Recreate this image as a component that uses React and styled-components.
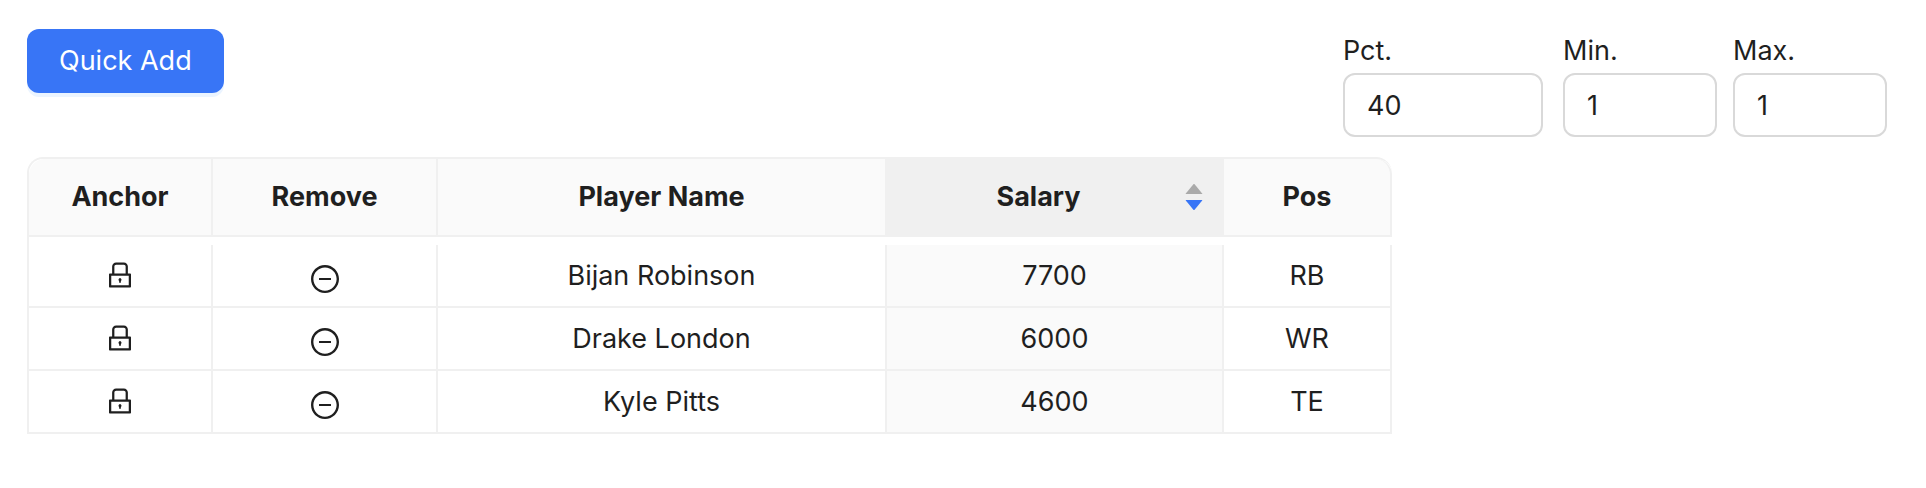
import React, { useState } from "react";
import styled, { createGlobalStyle } from "styled-components";
import { AiOutlineLock, AiOutlineMinusCircle } from "react-icons/ai";

const roster = [
  { name: "Bijan Robinson", salary: 7700, pos: "RB" },
  { name: "Drake London", salary: 6000, pos: "WR" },
  { name: "Kyle Pitts", salary: 4600, pos: "TE" },
];

export default function App() {
  const [players, setPlayers] = useState(roster);
  const [descending, setDescending] = useState(true);

  const rows = [...players].sort((a, b) =>
    descending ? b.salary - a.salary : a.salary - b.salary
  );

  const remove = (name) => setPlayers(players.filter((p) => p.name !== name));

  return (
    <Page>
      <GlobalStyle />
      <Toolbar>
        <PrimaryButton type="button">Quick Add</PrimaryButton>
        <Fields>
          <Field id="pct" label="Pct." value="40" width={200} />
          <Limits>
            <Field id="min" label="Min." value="1" width={154} />
            <Field id="max" label="Max." value="1" width={154} />
          </Limits>
        </Fields>
      </Toolbar>
      <TableContainer>
        <Table>
          <colgroup>
            <Col width={184} />
            <Col width={225} />
            <Col width={449} />
            <Col width={337} />
            <Col width={168} />
          </colgroup>
          <thead>
            <tr>
              <HeadCell>Anchor</HeadCell>
              <HeadCell>Remove</HeadCell>
              <HeadCell>Player Name</HeadCell>
              <HeadCell $sorted aria-sort={descending ? "descending" : "ascending"}>
                <SortButton type="button" onClick={() => setDescending(!descending)}>
                  <SortTitle>Salary</SortTitle>
                  <Sorter descending={descending} />
                </SortButton>
              </HeadCell>
              <HeadCell>Pos</HeadCell>
            </tr>
          </thead>
          <tbody>
            <tr aria-hidden="true">
              <SpacerCell colSpan={5} />
            </tr>
            {rows.map((player) => (
              <tr key={player.name}>
                <Cell>
                  <IconButton type="button" aria-label={`Anchor ${player.name}`}>
                    <AiOutlineLock />
                  </IconButton>
                </Cell>
                <Cell>
                  <RemoveButton
                    type="button"
                    aria-label={`Remove ${player.name}`}
                    onClick={() => remove(player.name)}
                  >
                    <AiOutlineMinusCircle />
                  </RemoveButton>
                </Cell>
                <Cell>{player.name}</Cell>
                <Cell $sorted>{player.salary}</Cell>
                <Cell>{player.pos}</Cell>
              </tr>
            ))}
          </tbody>
        </Table>
      </TableContainer>
    </Page>
  );
}

function Field({ id, label, value, width }) {
  return (
    <FieldBox $width={width}>
      <label htmlFor={id}>{label}</label>
      <Input id={id} type="text" inputMode="numeric" defaultValue={value} />
    </FieldBox>
  );
}

function Sorter({ descending }) {
  return (
    <SorterIcon viewBox="0 0 24 26" aria-hidden="true">
      <path
        d="M11.4 0.3q0.6-0.6 1.2 0l7.6 9.1q0.5 0.6-0.3 0.6h-15.8q-0.8 0-0.3-0.6z"
        fill={descending ? "#aaaaaa" : "#3875f6"}
      />
      <path
        d="M11.4 25.7q0.6 0.6 1.2 0l7.6-9.1q0.5-0.6-0.3-0.6h-15.8q-0.8 0-0.3 0.6z"
        fill={descending ? "#3875f6" : "#aaaaaa"}
      />
    </SorterIcon>
  );
}

const GlobalStyle = createGlobalStyle`
  *, *::before, *::after {
    box-sizing: border-box;
  }
  body {
    margin: 0;
    background: #ffffff;
    color: #1f1f1f;
    font-family: Inter, "Liberation Sans", sans-serif;
    font-size: 27px;
    line-height: 44px;
  }
  button, input {
    font: inherit;
    color: inherit;
  }
  button {
    cursor: pointer;
  }
`;

const Page = styled.main`
  padding: 29px 39px 29px 27px;
`;

const Toolbar = styled.div`
  display: flex;
  justify-content: space-between;
  align-items: flex-start;
  margin-bottom: 20px;
`;

const PrimaryButton = styled.button`
  height: 64px;
  padding: 0 32px;
  border: none;
  border-radius: 12px;
  background: #3875f6;
  box-shadow: 0 4px 0 #ebf4ff;
  color: #ffffff;
`;

const Fields = styled.div`
  display: flex;
  gap: 20px;
`;

const Limits = styled.div`
  display: flex;
  gap: 16px;
`;

const FieldBox = styled.div`
  display: flex;
  flex-direction: column;
  width: ${(props) => props.$width}px;
`;

const Input = styled.input`
  width: 100%;
  height: 64px;
  padding: 0 22px;
  border: 2px solid #d9d9d9;
  border-radius: 12px;
  background: #ffffff;
`;

const TableContainer = styled.div`
  max-width: 1365px;
  border-top: 2px solid #f0f0f0;
  border-left: 2px solid #f0f0f0;
  border-radius: 16px 16px 0 0;
`;

const Table = styled.table`
  width: 100%;
  table-layout: fixed;
  border-collapse: separate;
  border-spacing: 0;
  text-align: center;
`;

const Col = styled.col`
  width: ${(props) => props.width}px;
`;

const HeadCell = styled.th`
  padding: 16px;
  border-right: 2px solid #f0f0f0;
  border-bottom: 2px solid #f0f0f0;
  background: ${(props) => (props.$sorted ? "#f0f0f0" : "#fafafa")};
  font-weight: 700;
  &:first-child {
    border-top-left-radius: 16px;
  }
  &:last-child {
    border-top-right-radius: 16px;
  }
`;

const SortButton = styled.button`
  display: flex;
  align-items: center;
  gap: 8px;
  width: 100%;
  padding: 0;
  border: none;
  background: none;
`;

const SortTitle = styled.span`
  flex: 1;
`;

const SorterIcon = styled.svg`
  width: 24px;
  height: 26px;
`;

const SpacerCell = styled.td`
  height: 8px;
  padding: 0;
`;

const Cell = styled.td`
  height: 63px;
  padding: 0 16px;
  border-right: 2px solid #f0f0f0;
  border-bottom: 2px solid #f0f0f0;
  background: ${(props) => (props.$sorted ? "#fafafa" : "#ffffff")};
`;

const IconButton = styled.button`
  display: block;
  margin: 0 auto;
  padding: 0 0 2px;
  border: none;
  background: none;
  svg {
    display: block;
    width: 32px;
    height: 32px;
  }
`;

const RemoveButton = styled(IconButton)`
  padding: 6px 0 0;
`;
